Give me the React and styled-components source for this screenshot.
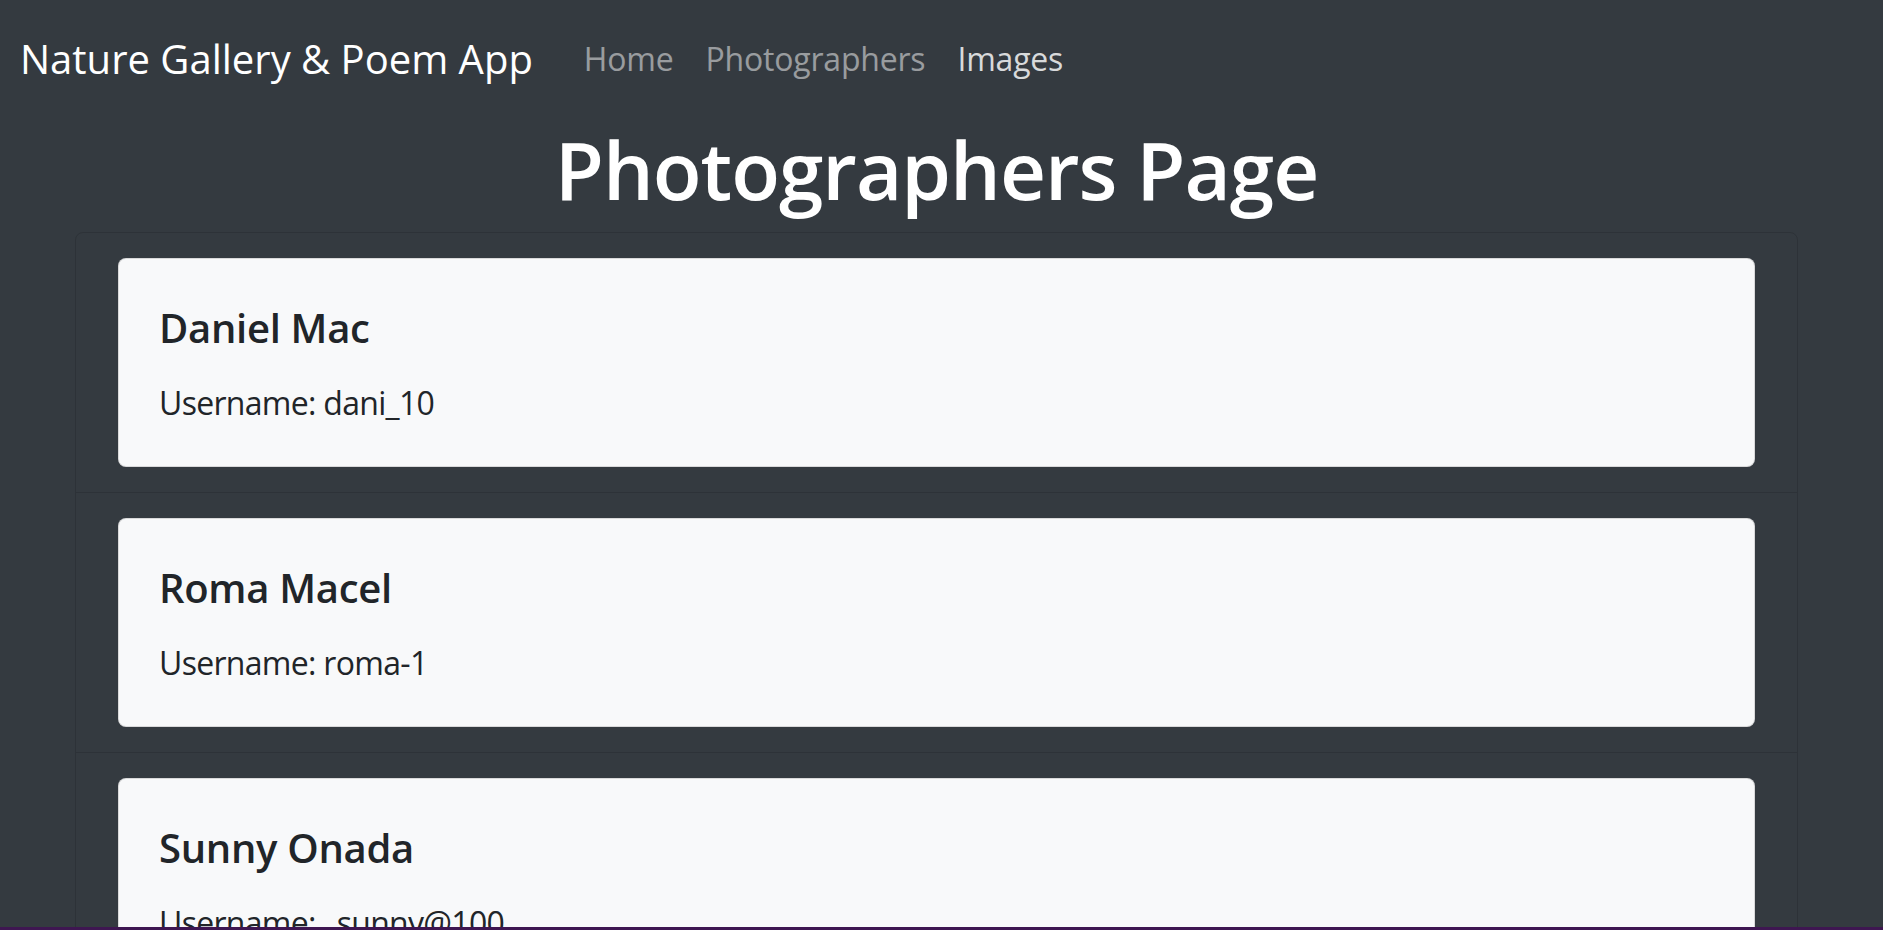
import React from 'react';
import styled, { createGlobalStyle } from "styled-components";

const photographers = [
  { name: "Daniel Mac", username: "dani_10" },
  { name: "Roma Macel", username: "roma-1" },
  { name: "Sunny Onada", username: "_sunny@100" },
];

const GlobalStyle = createGlobalStyle`
  html, body {
    margin: 0;
    padding: 0;
    background: #343a40;
    overflow: hidden;
  }

  body {
    font-family: "Open Sans", "Noto Sans", sans-serif;
    color: #212529;
  }

  * {
    box-sizing: border-box;
  }
`;

const App = () => {
  return (
    <Page>
      <GlobalStyle />
      <NavBar>
        <Brand href="#">Nature Gallery &amp; Poem App</Brand>
        <NavList>
          <NavItem><NavLink href="#">Home</NavLink></NavItem>
          <NavItem><NavLink href="#">Photographers</NavLink></NavItem>
          <NavItem><NavLink href="#" $active>Images</NavLink></NavItem>
        </NavList>
      </NavBar>

      <PageTitle>Photographers Page</PageTitle>

      <ListGroup>
        {photographers.map((p) => (
          <ListItem key={p.username}>
            <Card>
              <CardTitle>{p.name}</CardTitle>
              <CardText>Username: {p.username}</CardText>
            </Card>
          </ListItem>
        ))}
      </ListGroup>

      <BottomEdge />
    </Page>
  );
};

export default App;



const Page = styled.div`
  margin-right: 10px;
  min-height: 930px;
`;

const NavBar = styled.nav`
  display: flex;
  align-items: center;
  padding: 19px 20px 14px;
`;

const Brand = styled.a`
  padding: 10px 0;
  margin-right: 35px;
  font-size: 40px;
  line-height: 60px;
  color: #fff;
  text-decoration: none;
  white-space: nowrap;
`;

const NavList = styled.ul`
  display: flex;
  list-style: none;
  margin: 0;
  padding: 0;
`;

const NavItem = styled.li`
  display: block;
`;

const NavLink = styled.a`
  display: block;
  padding: 16px 16px;
  font-size: 32px;
  line-height: 48px;
  letter-spacing: -0.2px;
  text-decoration: none;
  color: ${(p) => (p.$active ? "rgba(255, 255, 255, 0.82)" : "rgba(255, 255, 255, 0.5)")};
`;

const PageTitle = styled.h1`
  margin: 8px 0 15px;
  text-align: center;
  font-size: 80px;
  line-height: 96px;
  font-weight: 600;
  letter-spacing: -1px;
  color: #fff;
`;

const ListGroup = styled.ul`
  margin: 0 75px;
  padding: 0;
  list-style: none;
  border: 1px solid rgba(0, 0, 0, 0.125);
  border-radius: 8px;
`;

const ListItem = styled.li`
  padding: 25px 42px;

  & + & {
    border-top: 1px solid rgba(0, 0, 0, 0.125);
  }
`;

const Card = styled.div`
  background: #f8f9fa;
  border: 1px solid rgba(0, 0, 0, 0.125);
  border-radius: 8px;
  padding: 45px 40px 39px;
`;

const CardTitle = styled.h5`
  margin: 0 0 27px;
  font-size: 40px;
  line-height: 48px;
  font-weight: 600;
  letter-spacing: -0.3px;
  color: #212529;
`;

const CardText = styled.p`
  margin: 0;
  font-size: 32px;
  line-height: 48px;
  letter-spacing: -0.7px;
  color: #212529;
`;

const BottomEdge = styled.div`
  position: fixed;
  left: 0;
  right: 0;
  bottom: 0;
  height: 3px;
  background: #3e1651;
`;
